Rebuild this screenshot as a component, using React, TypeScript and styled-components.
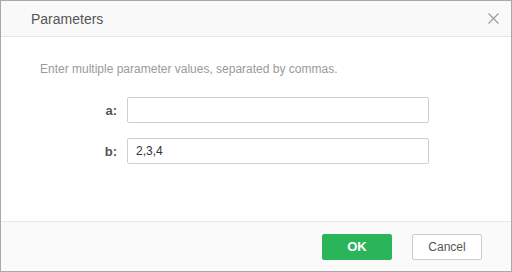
import React, { useState } from 'react'
import styled, { createGlobalStyle } from 'styled-components'

const GlobalStyle = createGlobalStyle`
  html, body {
    margin: 0;
    padding: 0;
    background: #ffffff;
  }
  body {
    font-family: "Liberation Sans", Arial, sans-serif;
  }
`

const Dialog = styled.div`
  width: 512px;
  height: 272px;
  box-sizing: border-box;
  border: 1px solid #a8a8a8;
  display: flex;
  flex-direction: column;
  background: #fff;
`

const Header = styled.header`
  height: 36px;
  box-sizing: border-box;
  border-bottom: 1px solid #e6e6e6;
  background: #f9f9f9;
  display: flex;
  align-items: center;
  justify-content: space-between;
  padding: 0 12px 0 30px;
`

const Title = styled.div`
  font-size: 14px;
  color: #555;
`

const CloseButton = styled.button`
  width: 12px;
  height: 12px;
  padding: 0;
  border: none;
  background: none;
  display: flex;
  align-items: center;
  justify-content: center;
  cursor: pointer;
`

const Body = styled.section`
  flex: 1;
  padding: 24px 0 0 39px;
`

const Hint = styled.div`
  font-size: 12px;
  line-height: 16px;
  color: #9a9a9a;
  margin-bottom: 20px;
`

const Form = styled.div`
  display: flex;
  flex-direction: column;
  gap: 15px;
`

const Row = styled.div`
  display: flex;
  align-items: center;
  gap: 10px;
`

const Label = styled.label`
  width: 77px;
  text-align: right;
  font-size: 13px;
  font-weight: bold;
  color: #555;
`

const Input = styled.input`
  width: 302px;
  height: 26px;
  box-sizing: border-box;
  border: 1px solid #cfcfcf;
  border-radius: 2px;
  padding: 0 8px;
  font-family: "Liberation Sans", Arial, sans-serif;
  font-size: 12px;
  color: #333;
  outline: none;
`

const Footer = styled.footer`
  height: 50px;
  box-sizing: border-box;
  border-top: 1px solid #e8e8e8;
  background: #fafafa;
  display: flex;
  align-items: center;
  justify-content: flex-end;
  gap: 20px;
  padding: 0 29px 0 0;
`

const Button = styled.button<{ $primary?: boolean }>`
  width: 70px;
  height: 26px;
  box-sizing: border-box;
  border-radius: 2px;
  font-family: "Liberation Sans", Arial, sans-serif;
  font-size: ${(p) => (p.$primary ? '13px' : '12px')};
  cursor: pointer;
  border: 1px solid ${(p) => (p.$primary ? '#2bb55b' : '#cccccc')};
  background: ${(p) => (p.$primary ? '#2bb55b' : '#ffffff')};
  color: ${(p) => (p.$primary ? '#ffffff' : '#555555')};
  font-weight: ${(p) => (p.$primary ? 'bold' : 'normal')};
`

function App() {
  const [a, setA] = useState('')
  const [b, setB] = useState('2,3,4')
  return (
    <>
      <GlobalStyle />
      <Dialog>
        <Header>
          <Title>Parameters</Title>
          <CloseButton aria-label="close">
            <svg width="11" height="11" viewBox="0 0 11 11">
              <path d="M0.5 0.5 L10.5 10.5 M10.5 0.5 L0.5 10.5" stroke="#9a9a9a" strokeWidth="1.1" />
            </svg>
          </CloseButton>
        </Header>
        <Body>
          <Hint>Enter multiple parameter values, separated by commas.</Hint>
          <Form>
            <Row>
              <Label>a:</Label>
              <Input value={a} onChange={(e) => setA(e.target.value)} />
            </Row>
            <Row>
              <Label>b:</Label>
              <Input value={b} onChange={(e) => setB(e.target.value)} />
            </Row>
          </Form>
        </Body>
        <Footer>
          <Button $primary>OK</Button>
          <Button>Cancel</Button>
        </Footer>
      </Dialog>
    </>
  )
}

export default App
